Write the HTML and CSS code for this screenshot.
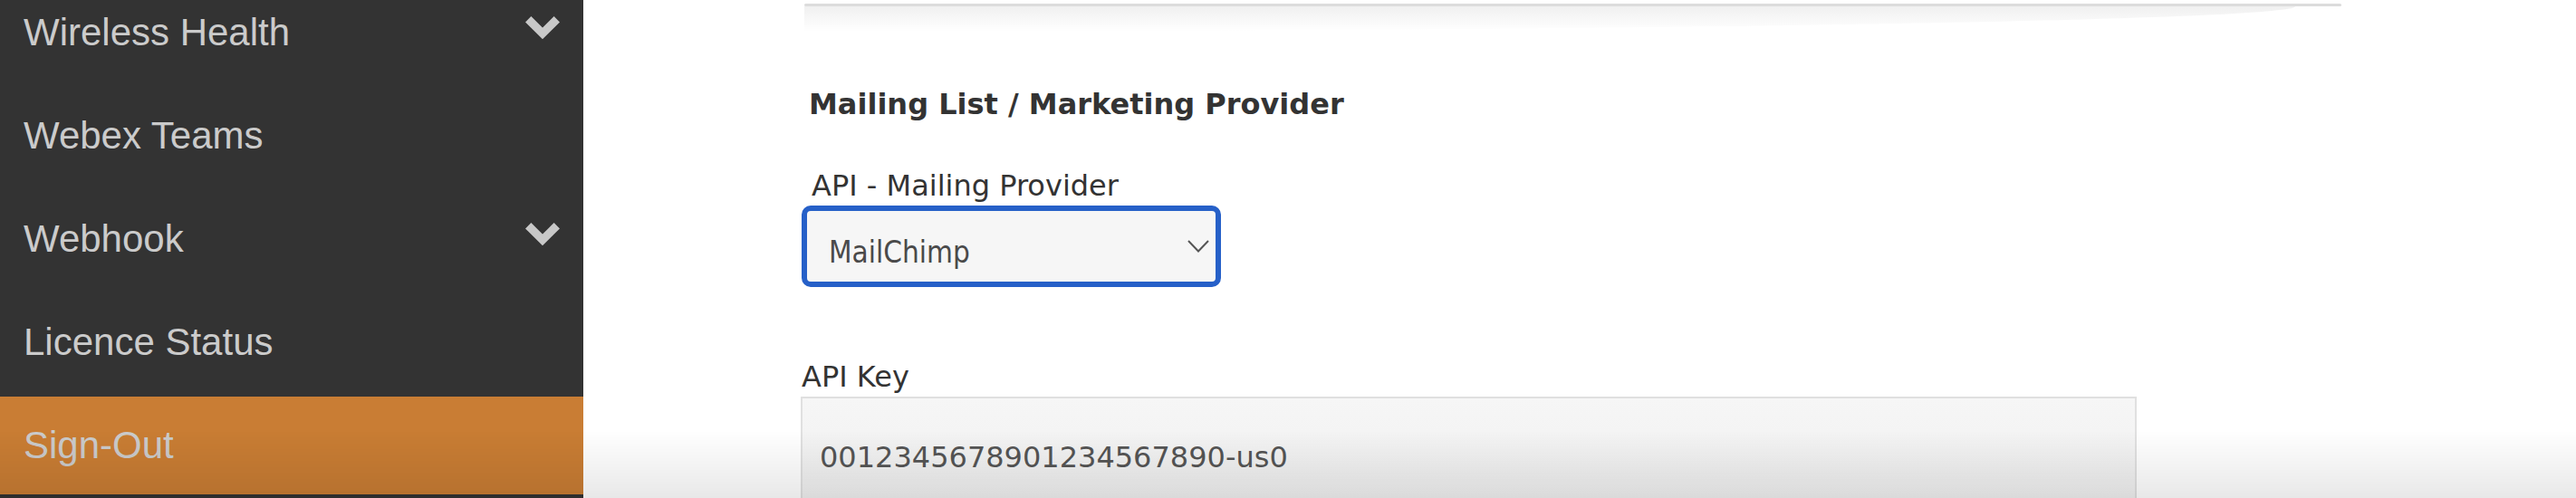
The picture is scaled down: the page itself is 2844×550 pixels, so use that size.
FILE: index.html
```html
<!DOCTYPE html>
<html lang="en">
<head>
    <meta charset="UTF-8">
    <meta name="viewport" content="width=device-width, initial-scale=1.0">
    <title>Mailing Provider</title>
    <link rel="stylesheet" href="styles.css">
</head>
<body>
    <nav class="sidebar">
        <ul class="menu">
            <li class="menu-item">
                <span>Wireless Health</span>
                <svg class="chev" viewBox="0 0 38 26" width="38" height="26"><polyline points="3.2,3.2 19,19 34.8,3.2"/></svg>
            </li>
            <li class="menu-item"><span>Webex Teams</span></li>
            <li class="menu-item">
                <span>Webhook</span>
                <svg class="chev" viewBox="0 0 38 26" width="38" height="26"><polyline points="3.2,3.2 19,19 34.8,3.2"/></svg>
            </li>
            <li class="menu-item"><span>Licence Status</span></li>
            <li class="menu-item active"><span>Sign-Out</span></li>
        </ul>
    </nav>

    <main class="content">
        <div class="card-edge"></div>

        <h3 class="section-title">Mailing List / Marketing Provider</h3>

        <div class="field">
            <label class="label label-indent">API - Mailing Provider</label>
            <div class="select">
                <span class="select-value">MailChimp</span>
                <svg class="caret" viewBox="0 0 24 14" width="24" height="14"><polyline points="1,1 12,12.5 23,1"/></svg>
            </div>
        </div>

        <div class="field field-key">
            <label class="label">API Key</label>
            <input type="text" class="key-input" value="0012345678901234567890-us0" readonly>
        </div>
    </main>

    <div class="fade"></div>
</body>
</html>
```

FILE: styles.css
```css
body {
    margin: 0;
    height: 550px;
    overflow: hidden;
    display: flex;
    background-color: #fff;
    font-family: "DejaVu Sans", Verdana, sans-serif;
    color: #333;
}
.sidebar {
    width: 644px;
    flex-shrink: 0;
    background-color: #333;
}
.menu {
    list-style: none;
    margin: -18px 0 0 0;
    padding: 0;
}
.menu-item {
    height: 108px;
    margin-bottom: 6px;
    padding: 0 26px 0 26px;
    display: flex;
    align-items: center;
    justify-content: space-between;
    font-family: "Liberation Sans", Arial, sans-serif;
    font-size: 42px;
    color: #cbcbcb;
}
.menu-item.active {
    background-color: #c97d34;
}
.chev {
    margin-bottom: 11px;
}
.chev polyline {
    fill: none;
    stroke: #c8c8c8;
    stroke-width: 9;
}
.content {
    flex: 1;
    padding: 4px 0 0 240px;
}
.card-edge {
    position: relative;
    width: 1697px;
    height: 3px;
    margin-left: 4px;
    background-color: #dcdcdc;
    border-radius: 2px;
}
.card-edge::after {
    content: "";
    position: absolute;
    left: 0;
    top: 3px;
    width: 97%;
    height: 28px;
    background: linear-gradient(to bottom, rgba(0, 0, 0, 0.06), rgba(0, 0, 0, 0));
    border-bottom-right-radius: 100% 100%;
}
.section-title {
    margin: 89px 0 0 9px;
    font-size: 32px;
    line-height: 38px;
    font-weight: bold;
    color: #333;
}
.field {
    margin-top: 52px;
}
.field-key {
    margin-top: 80px;
}
.label {
    display: block;
    font-size: 32px;
    line-height: 38px;
    margin-left: 1px;
    color: #333;
}
.label-indent {
    margin-left: 12px;
}
.select {
    box-sizing: border-box;
    width: 463px;
    height: 90px;
    margin: 3px 0 0 1px;
    padding: 0 7px 0 24px;
    border: 6px solid #2660c8;
    border-radius: 10px;
    background-color: #f6f6f6;
    display: flex;
    align-items: center;
    justify-content: space-between;
}
.select-value {
    padding-top: 13px;
    font-family: "DejaVu Sans Condensed", "DejaVu Sans", sans-serif;
    font-stretch: condensed;
    font-size: 33px;
    color: #4a4a4a;
}
.caret polyline {
    fill: none;
    stroke: #555;
    stroke-width: 2;
}
.key-input {
    display: block;
    box-sizing: border-box;
    width: 1475px;
    height: 134px;
    margin-top: 3px;
    padding: 0 19px;
    border: 2px solid #e0e0e0;
    background: linear-gradient(to bottom, #f6f6f6, #efefef);
    font-family: "DejaVu Sans", Verdana, sans-serif;
    font-size: 32px;
    color: #555;
    outline: none;
}
.fade {
    position: fixed;
    left: 0;
    right: 0;
    bottom: 0;
    height: 75px;
    background: linear-gradient(to bottom, rgba(0, 0, 0, 0), rgba(0, 0, 0, 0.09));
    pointer-events: none;
}
```
